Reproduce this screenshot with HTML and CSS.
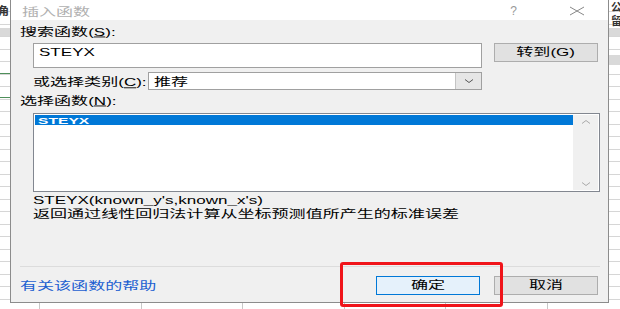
FILE: index.html
```html
<!DOCTYPE html>
<html lang="zh-CN">
  <head>
    <meta charset="utf-8" />
    <title>插入函数</title>
    <link rel="stylesheet" href="styles.css">
  </head>
  <body>
    <div class="sheet">
      <span class="cell-text ct-1">角</span>
      <span class="cell-text ct-2">公</span>
      <span class="cell-text ct-3">留</span>
      <div class="band band-left"></div>
      <div class="band band-right"></div>
      <div class="band band-right2"></div>
      <div class="green g1"></div>
      <div class="green g2"></div>
      <div class="cols"></div>

      <div class="dialog">
        <div class="titlebar">
          <span class="title wide">插入函数</span>
          <span class="help">?</span>
          <svg class="close" width="16" height="10" viewBox="0 0 16 10">
            <path d="M1 1 L15 9 M15 1 L1 9" stroke="#888" stroke-width="1" fill="none"/>
          </svg>
        </div>

        <div class="body">
          <div class="label"><span class="wide">搜索函数(<u>S</u>):</span></div>

          <div class="search-row">
            <div class="search-box"><span class="wide">STEYX</span></div>
            <button class="btn"><span class="wide-c">转到(<u>G</u>)</span></button>
          </div>

          <div class="cat-row">
            <div class="cat-label"><span class="wide">或选择类别(<u>C</u>):</span></div>
            <div class="select">
              <span class="wide">推荐</span>
              <span class="arrow">
                <svg width="10" height="6" viewBox="0 0 10 6">
                  <path d="M1 1.5 L5 4.5 L9 1.5" stroke="#555" stroke-width="1" fill="none"/>
                </svg>
              </span>
            </div>
          </div>

          <div class="label"><span class="wide">选择函数(<u>N</u>):</span></div>

          <div class="list">
            <div class="items">
              <div class="item selected"><span class="wide">STEYX</span></div>
            </div>
            <div class="scroll">
              <svg width="10" height="6" viewBox="0 0 10 6">
                <path d="M1 4.5 L5 1.5 L9 4.5" stroke="#aaa" stroke-width="1" fill="none"/>
              </svg>
              <svg width="10" height="6" viewBox="0 0 10 6">
                <path d="M1 1.5 L5 4.5 L9 1.5" stroke="#aaa" stroke-width="1" fill="none"/>
              </svg>
            </div>
          </div>

          <div class="sig"><span class="wide">STEYX(known_y's,known_x's)</span></div>
          <div class="desc"><span class="wide">返回通过线性回归法计算从坐标预测值所产生的标准误差</span></div>

          <div class="sep"></div>

          <div class="footer">
            <a class="help-link" href="#"><span class="wide">有关该函数的帮助</span></a>
            <div class="buttons">
              <button class="btn primary"><span class="wide-c">确定</span></button>
              <button class="btn"><span class="wide-c">取消</span></button>
            </div>
          </div>
        </div>
      </div>

      <div class="highlight"></div>
    </div>
  </body>
</html>
```

FILE: styles.css
```css
body {
  margin: 0;
  font-family: "Liberation Sans", "Noto Sans CJK SC", sans-serif;
  font-size: 12px;
  color: #000;
}

.sheet {
  position: relative;
  width: 620px;
  height: 309px;
  overflow: hidden;
  background-color: #fff;
  background-image: repeating-linear-gradient(to bottom, transparent 0, transparent 11.5px, #d6d6d6 11.5px, #d6d6d6 12.5px);
}

.cell-text {
  position: absolute;
  font-size: 11px;
  font-weight: bold;
  color: #333;
  line-height: 12px;
}

.ct-1 { left: -2px; top: 5px; }
.ct-2 { left: 611px; top: 1px; }
.ct-3 { left: 611px; top: 15px; }

.band {
  position: absolute;
  height: 8px;
  background: #d9d9d9;
}

.band-left { left: 0; width: 10px; top: 28px; }
.band-right { left: 609px; width: 11px; top: 28px; }
.band-right2 { left: 609px; width: 11px; top: 55px; height: 10px; }

.green {
  position: absolute;
  left: 0;
  width: 10px;
  height: 1px;
  background: #4e8f5a;
}

.g1 { top: 73px; }
.g2 { top: 97px; }

/* column borders peeking out under the dialog */
.cols {
  position: absolute;
  left: 0;
  top: 302px;
  width: 620px;
  height: 7px;
  background: #fff;
  background-image: repeating-linear-gradient(to right, transparent 0, transparent 39px, #c8c8c8 39px, #c8c8c8 40px, transparent 40px, transparent 101.6px);
}

/* the dialog window */
.dialog {
  position: absolute;
  left: 10px;
  top: 0;
  width: 597px;
  height: 302px;
  background: #f0f0f0;
  border: 1px solid #8c8c8c;
  border-top: none;
  display: flex;
  flex-direction: column;
}

.wide {
  display: inline-block;
  white-space: nowrap;
  transform: scale(1.42, 0.9);
  transform-origin: left center;
}

.wide-c {
  display: inline-block;
  white-space: nowrap;
  transform: scale(1.42, 0.9);
  transform-origin: center center;
}

.titlebar {
  height: 20px;
  background: #fff;
  display: flex;
  align-items: center;
  padding-left: 11px;
}

.title {
  color: #b0b0b0;
  margin-top: 3px;
}

.help {
  margin-left: auto;
  color: #999;
  font-size: 12px;
  margin-top: 2px;
}

.close {
  margin-left: 52px;
  margin-right: 23px;
  margin-top: 2px;
}

.body {
  flex: 1;
  display: flex;
  flex-direction: column;
  padding: 5px 8px 0 9px;
}

.label {
  height: 14px;
  line-height: 14px;
}

.search-row {
  display: flex;
  align-items: flex-start;
  gap: 12px;
  margin: 4px 2px 0 13px;
}

.search-box {
  flex: 1;
  height: 25px;
  box-sizing: border-box;
  background: #fff;
  border: 1px solid #a0a0a0;
  padding: 2px 5px;
  line-height: 13px;
}

.btn {
  width: 104px;
  height: 19px;
  padding: 0;
  background: #e1e1e1;
  border: 1px solid #adadad;
  font-family: inherit;
  font-size: 12px;
  color: #000;
  line-height: 15px;
}

.btn u {
  text-decoration: none;
}

.btn.primary {
  background: #e5f1fb;
  border-color: #0078d7;
}

.cat-row {
  display: flex;
  align-items: center;
  margin: 4px 0 0 13px;
}

.cat-label {
  width: 115px;
}

.select {
  width: 334px;
  height: 18px;
  box-sizing: border-box;
  background: #fff;
  border: 1px solid #a0a0a0;
  display: flex;
  align-items: center;
  padding-left: 5px;
}

.arrow {
  margin-left: auto;
  width: 25px;
  height: 16px;
  background: #e6e6e6;
  border-left: 1px solid #c4c4c4;
  display: flex;
  align-items: center;
  justify-content: center;
}

.cat-row + .label {
  margin-top: 4px;
}

.list {
  margin: 5px 0 0 13px;
  height: 79px;
  box-sizing: border-box;
  background: #fff;
  border: 1px solid #828790;
  display: flex;
  padding: 1px;
}

.items {
  flex: 1;
}

.item {
  height: 10px;
  line-height: 10px;
  padding-left: 3px;
  font-size: 11px;
  font-weight: bold;
}

.item.selected {
  background: #0078d7;
  color: #fff;
}

.scroll {
  width: 25px;
  background: #f0f0f0;
  display: flex;
  flex-direction: column;
  justify-content: space-between;
  align-items: center;
  padding: 4px 0 3px;
}

.sig {
  margin: 1px 0 0 13px;
  height: 14px;
  line-height: 14px;
}

.desc {
  margin-left: 13px;
  height: 14px;
  line-height: 14px;
}

.sep {
  margin-top: 45px;
  height: 1px;
  background: #dcdcdc;
}

.footer {
  display: flex;
  align-items: center;
  margin-top: 9px;
}

.help-link {
  color: #1c5fd1;
  text-decoration: underline;
}

.buttons {
  margin-left: auto;
  margin-right: 2px;
  display: flex;
  gap: 14px;
}

.highlight {
  position: absolute;
  left: 340px;
  top: 262px;
  width: 163px;
  height: 45px;
  box-sizing: border-box;
  border: 3px solid #f0141a;
  border-radius: 3px;
}
```
